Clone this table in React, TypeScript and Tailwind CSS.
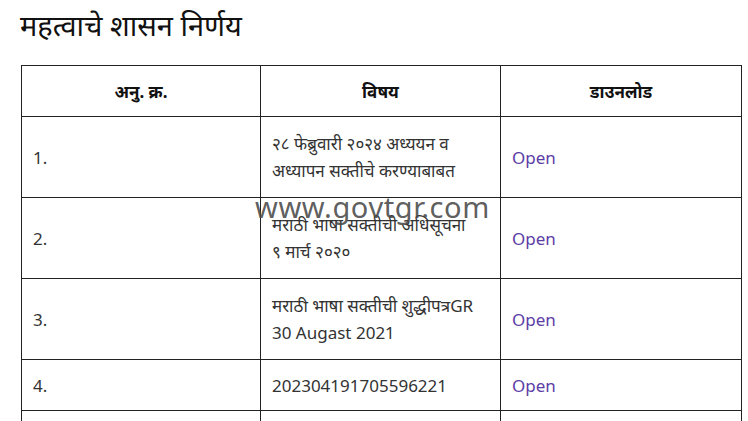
import React from 'react'

const rows = [
  { no: '1.', subject: ['२८ फेब्रुवारी २०२४ अध्ययन व', 'अध्यापन सक्तीचे करण्याबाबत'] },
  { no: '2.', subject: ['मराठी भाषा सक्तीची अधिसूचना', '९ मार्च २०२०'] },
  { no: '3.', subject: ['मराठी भाषा सक्तीची शुद्धीपत्रGR', '30 Augast 2021'] },
  { no: '4.', subject: ['20230419170559622' + '1'] },
  { no: '', subject: [''] },
]

export default function App() {
  return (
    <div
      className="relative h-[421px] w-[748px] overflow-hidden bg-white text-[#333]"
      style={{ fontFamily: '"Noto Sans", "Noto Sans Devanagari", "Open Sans", sans-serif' }}
    >
      <h2 className="pl-[20px] pt-[5px] text-[29px] leading-[40px] font-normal text-[#111]">
        महत्वाचे शासन निर्णय
      </h2>

      <table className="ml-[21px] mt-[20px] w-[721px] table-fixed border-collapse text-[17px] leading-[27px]">
        <thead>
          <tr className="h-[51px]">
            <th className="w-[239px] border border-[#222] p-0 text-center font-bold text-[#111]">अनु. क्र.</th>
            <th className="w-[240px] border border-[#222] p-0 text-center font-bold text-[#111]">विषय</th>
            <th className="border border-[#222] p-0 text-center font-bold text-[#111]">डाउनलोड</th>
          </tr>
        </thead>
        <tbody>
          {rows.map((r, i) => (
            <tr key={i} className={r.subject.length > 1 ? 'h-[81px]' : 'h-[51px]'}>
              <td className="border border-[#222] px-[11px] py-0 align-middle">{r.no}</td>
              <td className="border border-[#222] px-[11px] py-0 align-middle">
                {r.subject.map((s, j) => (
                  <div key={j}>{s || '\u00a0'}</div>
                ))}
              </td>
              <td className="border border-[#222] px-[11px] py-0 align-middle">
                {r.no && <a className="text-[#5b3da6]">Open</a>}
              </td>
            </tr>
          ))}
        </tbody>
      </table>

      <div className="pointer-events-none absolute left-[255px] top-[190px] text-[29px] leading-[34px] tracking-[0.6px] text-[#4a4a4a]/90">
        www.govtgr.com
      </div>
    </div>
  )
}
